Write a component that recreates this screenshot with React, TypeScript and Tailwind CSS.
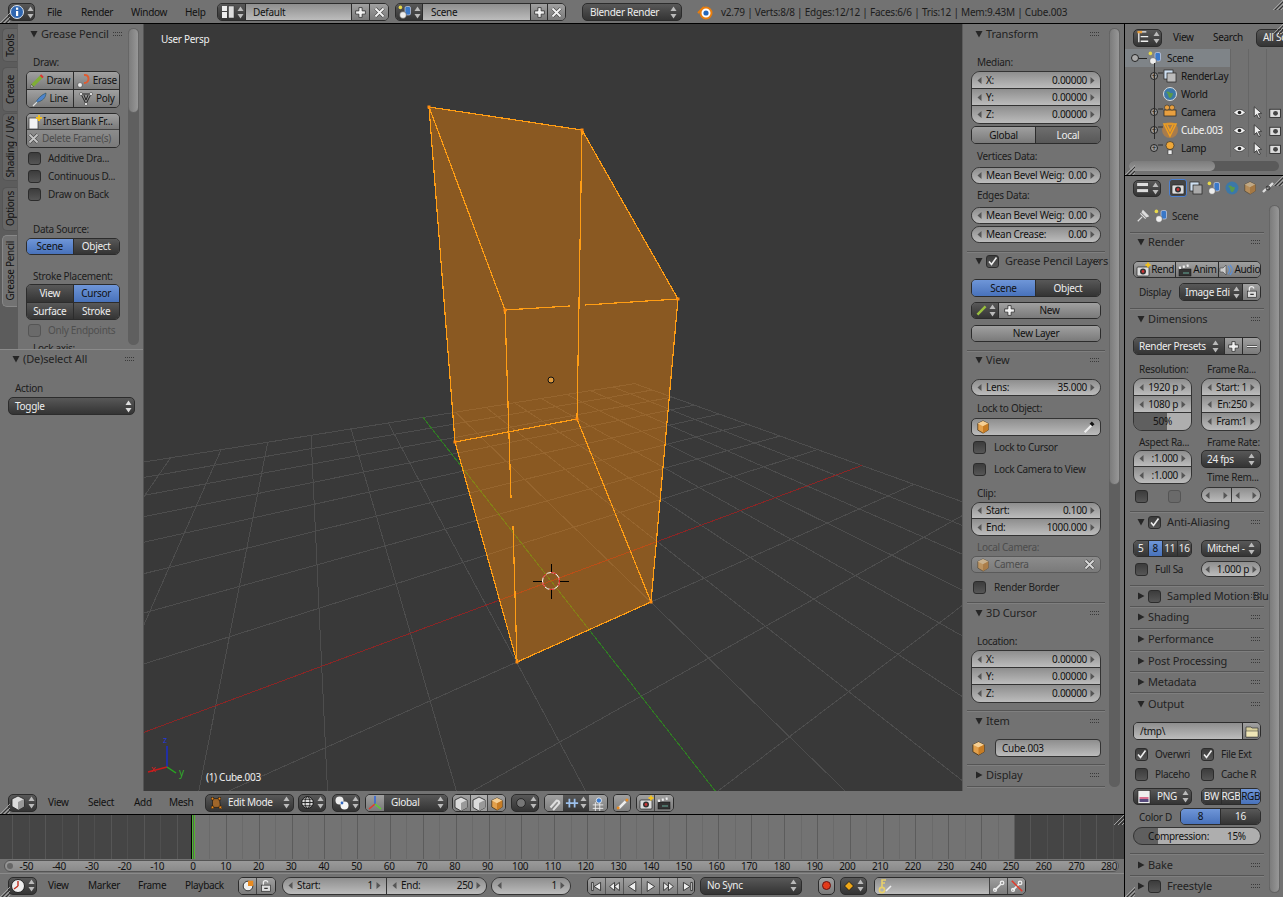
import type { ReactNode } from "react";

const tone = {
  tool: "bg-linear-to-b from-[#a0a0a0] to-[#7a7a7a] text-[#111]",
  dark: "bg-linear-to-b from-[#585858] to-[#343434] text-[#eee]",
  blue: "bg-linear-to-b from-[#6f96d8] to-[#4872bb] text-[#111]",
  num: "bg-linear-to-b from-[#8e8e8e] to-[#bcbcbc] text-[#111]",
  dis: "bg-linear-to-b from-[#8c8c8c] to-[#7a7a7a] text-[#4c4c4c]",
};
type Tone = keyof typeof tone;

const Ico = ({ children, s = 16, className = "" }: { children: ReactNode; s?: number; className?: string }) => (
  <svg width={s} height={s} viewBox="0 0 16 16" className={`shrink-0 ${className}`}>
    {children}
  </svg>
);

const UpDown = ({ c = "#bbb" }: { c?: string }) => (
  <svg width="7" height="13" viewBox="0 0 7 13" className="shrink-0">
    <polygon points="3.5,0.5 6.5,5 0.5,5" fill={c} />
    <polygon points="3.5,12.5 6.5,8 0.5,8" fill={c} />
  </svg>
);

const Info = () => (
  <Ico>
    <circle cx="8" cy="8" r="6.5" fill="#2f66b0" stroke="#dfe6f0" />
    <rect x="7" y="7" width="2.2" height="5" fill="#fff" />
    <rect x="7" y="3.6" width="2.2" height="2.2" fill="#fff" />
  </Ico>
);
const LayoutI = () => (
  <Ico>
    <rect x="2" y="2" width="5" height="5" fill="#eee" />
    <rect x="2" y="8" width="5" height="6" fill="#eee" />
    <rect x="8.5" y="2" width="5.5" height="12" fill="#ddd" stroke="#333" strokeWidth=".5" />
  </Ico>
);
const SceneI = () => (
  <Ico>
    <rect x="8" y="2.5" width="5.5" height="8.5" rx="1.5" fill="#3a78c8" stroke="#dde" strokeWidth=".6" />
    <circle cx="6" cy="11" r="3.4" fill="#eee" stroke="#333" strokeWidth=".5" />
    <circle cx="3.4" cy="3.4" r="1.8" fill="#e8d94a" />
  </Ico>
);
const Plus = () => (
  <Ico s={13}>
    <path d="M6 2h4v4h4v4h-4v4H6v-4H2V6h4z" fill="#f1f1f1" stroke="#333" strokeWidth="1" />
  </Ico>
);
const Cross = ({ c = "#f1f1f1" }: { c?: string }) => (
  <Ico s={13}>
    <path d="M3 3l10 10M13 3L3 13" stroke="#444" strokeWidth="4" />
    <path d="M3 3l10 10M13 3L3 13" stroke={c} strokeWidth="2.4" />
  </Ico>
);
const Logo = () => (
  <Ico>
    <path d="M1 9l6-6" stroke="#e87d0d" strokeWidth="2" />
    <circle cx="9" cy="9" r="5.5" fill="#fff" stroke="#e87d0d" strokeWidth="2" />
    <circle cx="9" cy="9" r="2.6" fill="#2667b8" />
  </Ico>
);
const PencilI = () => (
  <Ico>
    <path d="M3 13L13 3" stroke="#7fae36" strokeWidth="3.5" />
    <path d="M11.5 2l2.5 2.5" stroke="#d33" strokeWidth="2" />
    <path d="M1.5 14.5l1-3 2 2z" fill="#eee" stroke="#222" strokeWidth=".5" />
  </Ico>
);
const EraseI = () => (
  <Ico>
    <path d="M8 2c6-1 6 8 0 8" fill="none" stroke="#e05a30" strokeWidth="2" />
    <circle cx="4" cy="12" r="2.4" fill="#eee" stroke="#333" strokeWidth=".5" />
  </Ico>
);
const LineI = () => (
  <Ico>
    <path d="M3 13C5 8 9 4 14 2c0 5-4 8-8 9z" fill="#4c83cc" stroke="#244" strokeWidth=".5" />
    <path d="M1 15l4-4" stroke="#ddd" strokeWidth="1.2" />
  </Ico>
);
const PolyI = () => (
  <Ico>
    <path d="M3 3h10L8 13zM6 4l2 5 2-5" fill="none" stroke="#222" strokeWidth="1" />
    <circle cx="3" cy="3" r="1.5" fill="#fff" stroke="#222" strokeWidth=".5" />
    <circle cx="13" cy="3" r="1.5" fill="#fff" stroke="#222" strokeWidth=".5" />
    <circle cx="8" cy="13" r="1.5" fill="#fff" stroke="#222" strokeWidth=".5" />
  </Ico>
);
const NewFrame = () => (
  <Ico>
    <rect x="2" y="4" width="9" height="11" fill="#f2f2f2" stroke="#333" strokeWidth=".7" />
    <path d="M12 1v6M9 4h6" stroke="#f0c020" strokeWidth="2" />
  </Ico>
);
const Cube = ({ op = 1, s = 14 }: { op?: number; s?: number }) => (
  <Ico s={s} className={op < 1 ? "opacity-60" : ""}>
    <polygon points="8,1 14,4 14,11.5 8,15 2,11.5 2,4" fill="#e2a04c" stroke="#3a2a10" strokeWidth=".8" />
    <polygon points="8,1 14,4 8,7 2,4" fill="#f5cf94" />
    <polygon points="8,7 14,4 14,11.5 8,15" fill="#c77c24" />
  </Ico>
);
const GrayCube = () => (
  <Ico>
    <polygon points="8,1 14,4 14,11.5 8,15 2,11.5 2,4" fill="#dcdcdc" stroke="#222" strokeWidth=".8" />
    <polygon points="8,7 14,4 14,11.5 8,15" fill="#999" />
  </Ico>
);
const Dropper = () => (
  <Ico s={14}>
    <path d="M3 14l8-8" stroke="#eee" strokeWidth="2.4" />
    <path d="M10 3l3 3" stroke="#111" strokeWidth="3.6" />
  </Ico>
);
const CamR = ({ plus }: { plus?: boolean }) => (
  <Ico>
    <rect x="2" y="5" width="12" height="9" rx="1" fill="#ddd" stroke="#222" strokeWidth=".7" />
    <circle cx="8" cy="9.5" r="3" fill="#333" />
    <circle cx="8" cy="9.5" r="1.4" fill="#c33" />
    {plus && <path d="M13 0.5v5M10.5 3h5" stroke="#f0c020" strokeWidth="1.8" />}
  </Ico>
);
const Clapper = () => (
  <Ico>
    <rect x="2" y="7" width="12" height="7" fill="#333" stroke="#111" strokeWidth=".5" />
    <path d="M2 6l11-3" stroke="#eee" strokeWidth="2.4" strokeDasharray="2 2" />
    <path d="M6 11h6" stroke="#6a9" strokeWidth="1" />
  </Ico>
);
const Speaker = () => (
  <Ico>
    <polygon points="2,6 5,6 8,3 8,13 5,10 2,10" fill="#ccc" stroke="#333" strokeWidth=".5" />
    <path d="M10 4c2 2 2 6 0 8M12 3c3 3 3 7 0 10" fill="none" stroke="#5b8fd6" strokeWidth="1.2" />
  </Ico>
);
const LockI = () => (
  <Ico s={14}>
    <path d="M5 7V4c0-3 5-3 5 0" fill="none" stroke="#eee" strokeWidth="1.5" />
    <rect x="3" y="7" width="10" height="7" fill="#ddd" stroke="#222" strokeWidth=".7" />
    <rect x="6" y="10" width="4" height="1.4" fill="#333" />
  </Ico>
);
const Folder = () => (
  <Ico>
    <path d="M2 4h5l1 1h6v9H2z" fill="#d8cf9c" stroke="#333" strokeWidth=".7" />
    <path d="M2 8h12v6H2z" fill="#efe6b6" stroke="#333" strokeWidth=".5" />
  </Ico>
);
const PngI = () => (
  <Ico>
    <rect x="2" y="1.5" width="12" height="13" fill="#eee" stroke="#222" strokeWidth=".6" />
    <rect x="3.5" y="8" width="9" height="2" fill="#d86f8f" />
    <rect x="3.5" y="10" width="9" height="3" fill="#554a7c" />
  </Ico>
);
const Key = () => (
  <Ico>
    <circle cx="5" cy="12" r="2.6" fill="none" stroke="#e8d06a" strokeWidth="1.6" />
    <path d="M5 9V2h4M5 5h3" fill="none" stroke="#e8d06a" strokeWidth="1.6" />
    <path d="M9 13l5-5" stroke="#eee" strokeWidth="1.6" />
  </Ico>
);
const Wrench = ({ off }: { off?: boolean }) => (
  <Ico s={14}>
    <path d="M3 13l7-7" stroke="#eee" strokeWidth="2" />
    <circle cx="11.5" cy="4.5" r="2" fill="none" stroke="#eee" strokeWidth="1.4" />
    <circle cx="3.5" cy="12.5" r="1.8" fill="none" stroke="#eee" strokeWidth="1.2" />
    {off && <path d="M2 2l12 12" stroke="#e23a2a" strokeWidth="1.8" />}
  </Ico>
);
const EditModeI = () => (
  <Ico s={14}>
    <path d="M4 3h8l1 10H4z" fill="#a0662a" stroke="#111" strokeWidth=".7" />
    <g fill="#f08a18" stroke="#111" strokeWidth=".5">
      <rect x="2.5" y="1.5" width="3" height="3" />
      <rect x="10.5" y="1.5" width="3" height="3" />
      <rect x="2.5" y="11.5" width="3" height="3" />
      <rect x="11.5" y="11.5" width="3" height="3" />
    </g>
  </Ico>
);
const SphereI = () => (
  <Ico s={15}>
    <circle cx="8" cy="8" r="6.2" fill="#d8d8d8" stroke="#111" />
    <ellipse cx="8" cy="8" rx="2.6" ry="6.2" fill="none" stroke="#222" />
    <path d="M2 8h12M3.4 4.5h9.2M3.4 11.5h9.2" stroke="#222" strokeWidth="1" />
  </Ico>
);
const ShadeI = () => (
  <Ico>
    <circle cx="5.5" cy="5.5" r="4" fill="#eee" />
    <circle cx="10.5" cy="10.5" r="4" fill="#f4f4f4" />
    <circle cx="8" cy="8" r="1.4" fill="#2f66c0" />
  </Ico>
);
const AxisI = () => (
  <Ico>
    <path d="M8 9V1" stroke="#3568d8" strokeWidth="1.6" />
    <path d="M8 9l-6 5" stroke="#e03b2c" strokeWidth="1.6" />
    <path d="M8 9l6 5" stroke="#5bd02a" strokeWidth="1.6" />
  </Ico>
);
const Eye = () => (
  <Ico s={13}>
    <path d="M1 8c4-5 10-5 14 0-4 5-10 5-14 0z" fill="#f2f2f2" stroke="#222" strokeWidth=".7" />
    <circle cx="8" cy="8" r="2.2" fill="#222" />
  </Ico>
);
const CursorI = () => (
  <Ico s={13}>
    <path d="M4 1l9 8-4 .5 2.5 5-2 1-2.5-5L4 13z" fill="#eee" stroke="#222" strokeWidth=".9" />
  </Ico>
);
const Expand = () => (
  <span className="flex items-center justify-center w-[8px] h-[8px] rounded-full border border-[#222] bg-[#9a9a9a] text-[8px] leading-none text-[#111] shrink-0">
    +
  </span>
);

const Arrow = ({ open = true }: { open?: boolean }) => (
  <svg width="8" height="8" viewBox="0 0 8 8" className="shrink-0">
    {open ? <polygon points="0.5,1 7.5,1 4,7.5" fill="#262626" /> : <polygon points="1,0.5 7.5,4 1,7.5" fill="#262626" />}
  </svg>
);
const Grip = () => (
  <svg width="9" height="5" viewBox="0 0 9 5" className="shrink-0">
    {[0, 2, 4, 6, 8].map((x) => (
      <g key={x}>
        <rect x={x} y="0" width="1" height="1" fill="#3a3a3a" />
        <rect x={x} y="3" width="1" height="1" fill="#3a3a3a" />
      </g>
    ))}
  </svg>
);
const Check = ({ on, dis, className = "" }: { on?: boolean; dis?: boolean; className?: string }) => (
  <span
    className={`flex items-center justify-center w-[13px] h-[13px] rounded-[3px] border shrink-0 ${
      dis ? "border-[#555] bg-[#6a6a6a]" : "border-[#2c2c2c] bg-linear-to-b from-[#3c3c3c] to-[#565656]"
    } ${className}`}>
    {on && (
      <svg width="11" height="11" viewBox="0 0 11 11">
        <path d="M2 5.5l2.5 3L9.5 1.5" fill="none" stroke="#eee" strokeWidth="1.6" />
      </svg>
    )}
  </span>
);

const Head = ({ title, open = true, check, pad, className = "" }: { title: string; open?: boolean; check?: boolean; pad: string; className?: string }) => (
  <div className={`flex items-center h-[14px] whitespace-nowrap text-[#222] text-[11px] tracking-[-0.15px] ${pad} ${className}`}>
    <Arrow open={open} />
    {check !== undefined && <Check on={check} className="ml-[3px]" />}
    <span className={`flex-1 min-w-0 ${check !== undefined ? "ml-[6px]" : "ml-[3px]"}`}>{title}</span>
    <Grip />
  </div>
);
const Rule = ({ className = "" }: { className?: string }) => <div className={`h-px bg-[#555] shadow-[0_1px_0_#7f7f7f] ${className}`} />;
const Lbl = ({ children, className = "" }: { children: ReactNode; className?: string }) => (
  <div className={`h-[14px] leading-[14px] pl-[6px] whitespace-nowrap overflow-hidden text-[#1c1c1c] ${className}`}>{children}</div>
);
const ChkRow = ({ children, on, dis, gap = "ml-[7px]", className = "" }: { children: ReactNode; on?: boolean; dis?: boolean; gap?: string; className?: string }) => (
  <div className={`flex items-center h-[14px] pl-[2px] whitespace-nowrap overflow-hidden ${dis ? "text-[#4f4f4f]" : "text-[#1c1c1c]"} ${className}`}>
    <Check on={on} dis={dis} />
    <span className={gap}>{children}</span>
  </div>
);
const Cell = ({ t = "tool", className = "", children }: { t?: Tone; className?: string; children?: ReactNode }) => (
  <div className={`flex items-center justify-center whitespace-nowrap overflow-hidden ${tone[t]} ${className}`}>{children}</div>
);
const Joined = ({ children, className = "" }: { children: ReactNode; className?: string }) => (
  <div className={`flex overflow-hidden rounded-[5px] border border-[#2c2c2c] divide-x divide-[#2c2c2c] ${className}`}>{children}</div>
);
const Arr = ({ dir }: { dir: "l" | "r" }) => (
  <svg width="5" height="7" viewBox="0 0 5 7" className="shrink-0">
    <polygon points={dir === "l" ? "4.5,0 4.5,7 0.5,3.5" : "0.5,0 0.5,7 4.5,3.5"} fill="#555" />
  </svg>
);
const Num = ({ label, value, className = "" }: { label?: string; value?: string; className?: string }) => (
  <div className={`flex items-center h-[17px] px-[5px] whitespace-nowrap overflow-hidden text-[#111] bg-linear-to-b from-[#8e8e8e] to-[#bcbcbc] ${className}`}>
    <Arr dir="l" />
    {label && <span className="ml-[4px]">{label}</span>}
    <span className="ml-auto mr-[3px]">{value}</span>
    <Arr dir="r" />
  </div>
);
const Pill = ({ children, className = "" }: { children: ReactNode; className?: string }) => (
  <div className={`flex flex-col overflow-hidden rounded-[9px] border border-[#333] divide-y divide-[#333] ${className}`}>{children}</div>
);
const One = ({ label, value, className = "" }: { label: string; value: string; className?: string }) => (
  <Pill className={className}>
    <Num label={label} value={value} className="!h-[15px]" />
  </Pill>
);
const DropIcon = ({ children, className = "" }: { children: ReactNode; className?: string }) => (
  <div className={`flex items-center justify-center gap-[2px] h-[18px] shrink-0 whitespace-nowrap rounded-[5px] border border-[#2c2c2c] ${tone.dark} ${className}`}>
    {children}
    <UpDown />
  </div>
);
const Corner = ({ className = "" }: { className?: string }) => (
  <svg width="10" height="10" viewBox="0 0 10 10" className={`absolute ${className}`}>
    <path d="M0 10L10 0M4 10l6-6M8 10l2-2" stroke="#a0a0a0" strokeWidth="1" />
    <path d="M2 10l8-8M6 10l4-4" stroke="#333" strokeWidth="1" />
  </svg>
);
const Scrollbar = ({ className = "", thumb }: { className?: string; thumb: string }) => (
  <div className={`flex flex-col w-[11px] rounded-[6px] bg-[#5f5f5f] shrink-0 ${className}`}>
    <div className={`rounded-[6px] bg-linear-to-r from-[#7c7c7c] to-[#979797] border border-[#666] ${thumb}`} />
  </div>
);
const M = ({ w, children }: { w: string; children: ReactNode }) => <span className={`${w} shrink-0 text-[#111]`}>{children}</span>;

// floor grid: projective map with the vanishing points read off the picture
const O = [551, 581];
const V1 = [1420, 258];
const V2 = [303, 264];
const A = 0.0696;
const B = 0.1333;
const pt = (u: number, v: number) => {
  const w = 1 + A * u + B * v;
  return [(O[0] + A * u * V1[0] + B * v * V2[0]) / w, (O[1] + A * u * V1[1] + B * v * V2[1]) / w];
};
const seg = (u0: number, v0: number, u1: number, v1: number) => {
  const a = pt(u0, v0);
  const b = pt(u1, v1);
  return `M${a[0].toFixed(1)} ${a[1].toFixed(1)}L${b[0].toFixed(1)} ${b[1].toFixed(1)}`;
};
const lineU = (u: number) => seg(u, Math.max(-8, (0.06 - 1 - A * u) / B), u, 8);
const lineV = (v: number) => seg(Math.max(-8, (0.06 - 1 - B * v) / A), v, 8, v);
const steps = Array.from({ length: 17 }, (_, i) => i - 8);
const gridPath = [...steps.filter((s) => s !== 0).map(lineU), ...steps.filter((s) => s !== 0).map(lineV)].join("");

const Edge = ({ d }: { d: string }) => <path d={d} fill="none" stroke="#ff9d14" strokeWidth="1.2" shapeRendering="crispEdges" />;

const Viewport = () => (
  <div className="relative flex-1 bg-[#393939] overflow-hidden">
    <svg width="818" height="767" viewBox="144 24 818 767" className="block">
      <path d={gridPath} fill="none" stroke="#4d4d4d" strokeWidth="1" shapeRendering="crispEdges" />
      <path d={lineU(0)} fill="none" stroke="#2f7d22" strokeWidth="1" shapeRendering="crispEdges" />
      <path d={lineV(0)} fill="none" stroke="#8a2626" strokeWidth="1" shapeRendering="crispEdges" />
      <polygon points="429,107 582,130 678,299 651,602 517,662 455,442" fill="#ff8903" fillOpacity=".41" />
      <Edge d="M429 107L582 130L678 299L651 602L517 662L455 442L429 107" />
      <Edge d="M429 107L505 310L570 306M585 305L678 299" />
      <Edge d="M582 130L577 419L651 602" />
      <Edge d="M455 442L577 419" />
      <Edge d="M505 310L511 498M513 526L517 662" />
      {[[429, 107], [582, 130], [678, 299], [505, 310], [455, 442], [577, 419], [517, 662], [651, 602]].map(([x, y]) => (
        <rect key={`${x}-${y}`} x={x - 1.5} y={y - 1.5} width="3" height="3" fill="#ff8c10" />
      ))}
      <circle cx="551" cy="380" r="3" fill="#e09a3c" stroke="#111" />
      <circle cx="551" cy="581" r="8.5" fill="none" stroke="#fff" strokeWidth="1" />
      <circle cx="551" cy="581" r="8.5" fill="none" stroke="#e01010" strokeWidth="1" strokeDasharray="5 5" />
      <path d="M533 581h9M560 581h9M551 564v8M551 590v9" stroke="#000" strokeWidth="1" shapeRendering="crispEdges" />
      <path d="M167 767V746" stroke="#1a2cc8" strokeWidth="1.5" />
      <path d="M167 767l-19 5" stroke="#c81a1a" strokeWidth="1.5" />
      <path d="M167 767l9 6" stroke="#28a820" strokeWidth="1.5" />
    </svg>
    <span className="absolute left-[17px] top-[8px] text-[#f0f0f0]">User Persp</span>
    <span className="absolute left-[62px] top-[746px] text-[#f0f0f0]">(1) Cube.003</span>
    <span className="absolute left-[19px] top-[709px] text-[#2438d8] text-[9px]">z</span>
    <span className="absolute left-[7px] top-[738px] text-[#d02020] text-[9px]">x</span>
    <span className="absolute left-[35px] top-[741px] text-[#30b028] text-[10px]">y</span>
  </div>
);

const TAB = "flex items-center justify-center w-[15px] rounded-l-[5px] border border-r-0 whitespace-nowrap";

const Shelf = () => (
  <div className="flex flex-col w-[144px] h-full border-r border-[#555] bg-[#727272] shrink-0">
    <div className="flex h-[325px] shrink-0 overflow-hidden">
      <div className="flex flex-col w-[18px] pl-[2px] pt-[4px] bg-[#5c5c5c] shrink-0 text-[#111] *:shrink-0">
        <div className={`${TAB} h-[34px] bg-[#666] border-[#555]`}><span className="[writing-mode:vertical-rl] rotate-180">Tools</span></div>
        <div className={`${TAB} h-[45px] mt-[5px] bg-[#666] border-[#555]`}><span className="[writing-mode:vertical-rl] rotate-180">Create</span></div>
        <div className={`${TAB} h-[68px] mt-px bg-[#666] border-[#555]`}><span className="[writing-mode:vertical-rl] rotate-180">Shading / UVs</span></div>
        <div className={`${TAB} h-[44px] mt-[6px] bg-[#666] border-[#555]`}><span className="[writing-mode:vertical-rl] rotate-180">Options</span></div>
        <div className={`${TAB} h-[72px] mt-[4px] bg-[#727272] border-[#888]`}><span className="[writing-mode:vertical-rl] rotate-180">Grease Pencil</span></div>
      </div>
      <div className="flex flex-col w-[94px] ml-[8px] shrink-0 *:shrink-0">
        <Head title="Grease Pencil" pad="pl-[4px] -mr-[2px]" className="mt-[3px]" />
        <Lbl className="mt-[14px] pl-[7px]">Draw:</Lbl>
        <div className="flex flex-col overflow-hidden rounded-[5px] border border-[#2c2c2c] mt-[2px] divide-y divide-[#2c2c2c]">
          <div className="flex divide-x divide-[#2c2c2c]">
            <Cell className="h-[17px] flex-1 gap-[1px]"><PencilI />Draw</Cell>
            <Cell className="h-[17px] flex-1 gap-[1px]"><EraseI />Erase</Cell>
          </div>
          <div className="flex divide-x divide-[#2c2c2c]">
            <Cell className="h-[17px] flex-1 gap-[2px]"><LineI />Line</Cell>
            <Cell className="h-[17px] flex-1 gap-[2px]"><PolyI />Poly</Cell>
          </div>
        </div>
        <div className="flex flex-col overflow-hidden rounded-[5px] border border-[#2c2c2c] mt-[5px]">
          <Cell className="h-[16px] border-b border-[#444] !justify-start"><NewFrame />Insert Blank Fr...</Cell>
          <Cell t="dis" className="h-[17px] !justify-start"><Cross c="#c4c4c4" /><span className="ml-[2px]">Delete Frame(s)</span></Cell>
        </div>
        <ChkRow className="mt-[3px]">Additive Dra...</ChkRow>
        <ChkRow className="mt-[4px]">Continuous D...</ChkRow>
        <ChkRow className="mt-[4px]">Draw on Back</ChkRow>
        <Lbl className="mt-[21px] pl-[7px]">Data Source:</Lbl>
        <Joined className="mt-[2px]">
          <Cell t="blue" className="h-[15px] flex-1">Scene</Cell>
          <Cell t="dark" className="h-[15px] flex-1">Object</Cell>
        </Joined>
        <Lbl className="mt-[14px] pl-[7px]">Stroke Placement:</Lbl>
        <div className="flex flex-col overflow-hidden rounded-[5px] border border-[#2c2c2c] mt-[1px] divide-y divide-[#2c2c2c]">
          <div className="flex divide-x divide-[#2c2c2c]">
            <Cell t="dark" className="h-[17px] flex-1">View</Cell>
            <Cell t="blue" className="h-[17px] flex-1">Cursor</Cell>
          </div>
          <div className="flex divide-x divide-[#2c2c2c]">
            <Cell t="dark" className="h-[16px] flex-1">Surface</Cell>
            <Cell t="dark" className="h-[16px] flex-1">Stroke</Cell>
          </div>
        </div>
        <ChkRow dis className="mt-[3px]">Only Endpoints</ChkRow>
        <Lbl className="mt-[4px] pl-[7px]">Lock axis:</Lbl>
      </div>
      <Scrollbar className="ml-[8px] mt-[4px] h-[317px]" thumb="h-[85px]" />
    </div>
    <div className="flex flex-col flex-1 border-t border-[#8a8a8a] px-[8px] *:shrink-0">
      <Head title="(De)select All" pad="pl-[4px]" className="mt-[2px] pr-px" />
      <Lbl className="mt-[15px] pl-[7px]">Action</Lbl>
      <div className={`flex items-center h-[18px] mt-[2px] pl-[6px] pr-[2px] rounded-[5px] border border-[#2c2c2c] ${tone.dark}`}>
        <span className="flex-1">Toggle</span>
        <UpDown c="#ddd" />
      </div>
    </div>
  </div>
);

const NPanel = () => (
  <div className="relative flex w-[162px] h-full bg-[#727272] border-l border-[#5c5c5c] pl-[4px] shrink-0">
    <div className="flex flex-col w-[138px] px-[4px] shrink-0 *:shrink-0">
      <Head title="Transform" pad="pl-[4px] pr-[2px]" className="mt-[3px]" />
      <Lbl className="mt-[14px]">Median:</Lbl>
      <Pill className="mt-[2px]">
        <Num label="X:" value="0.00000" />
        <Num label="Y:" value="0.00000" />
        <Num label="Z:" value="0.00000" />
      </Pill>
      <Joined className="mt-[2px]">
        <Cell className="h-[16px] w-[64px]">Global</Cell>
        <Cell className="h-[16px] flex-1 !from-[#6e6e6e] !to-[#585858] !text-[#eee]">Local</Cell>
      </Joined>
      <Lbl className="mt-[5px]">Vertices Data:</Lbl>
      <One className="mt-[4px]" label="Mean Bevel Weig:" value="0.00" />
      <Lbl className="mt-[4px]">Edges Data:</Lbl>
      <One className="mt-[5px]" label="Mean Bevel Weig:" value="0.00" />
      <One className="mt-[2px]" label="Mean Crease:" value="0.00" />
      <Rule className="mt-[8px] -mx-[4px]" />
      <Head title="Grease Pencil Layers" check pad="pl-[4px] pr-[2px]" className="mt-[2px]" />
      <Joined className="mt-[11px]">
        <Cell t="blue" className="h-[16px] w-[64px]">Scene</Cell>
        <Cell t="dark" className="h-[16px] flex-1">Object</Cell>
      </Joined>
      <Joined className="mt-[5px]">
        <Cell t="dark" className="h-[15px] w-[27px] gap-[1px]"><Ico s={13}><path d="M3 13L13 3" stroke="#9ac03e" strokeWidth="3" /></Ico><UpDown /></Cell>
        <Cell className="h-[15px] flex-1 relative"><span className="absolute left-[4px] top-[1px]"><Plus /></span>New</Cell>
      </Joined>
      <Joined className="mt-[6px]">
        <Cell className="h-[15px] flex-1">New Layer</Cell>
      </Joined>
      <Rule className="mt-[8px] -mx-[4px]" />
      <Head title="View" pad="pl-[4px] pr-[2px]" className="mt-[2px]" />
      <One className="mt-[12px]" label="Lens:" value="35.000" />
      <Lbl className="mt-[5px]">Lock to Object:</Lbl>
      <div className={`flex items-center justify-between h-[18px] mt-[3px] px-[4px] rounded-[5px] border border-[#333] ${tone.num}`}>
        <Cube /><Dropper />
      </div>
      <ChkRow className="mt-[4px]" gap="ml-[8px]">Lock to Cursor</ChkRow>
      <ChkRow className="mt-[8px]" gap="ml-[8px]">Lock Camera to View</ChkRow>
      <Lbl className="mt-[10px]">Clip:</Lbl>
      <Pill className="mt-[2px]">
        <Num label="Start:" value="0.100" className="!h-[16px]" />
        <Num label="End:" value="1000.000" className="!h-[16px]" />
      </Pill>
      <Lbl className="mt-[4px] !text-[#4c4c4c]">Local Camera:</Lbl>
      <div className={`flex items-center h-[17px] mt-[2px] px-[4px] rounded-[5px] border border-[#5a5a5a] ${tone.dis}`}>
        <Cube op={0.6} />
        <span className="ml-[4px] flex-1">Camera</span>
        <Cross c="#d8d8d8" />
      </div>
      <ChkRow className="mt-[7px]" gap="ml-[8px]">Render Border</ChkRow>
      <Rule className="mt-[8px] -mx-[4px]" />
      <Head title="3D Cursor" pad="pl-[4px] pr-[2px]" className="mt-[3px]" />
      <Lbl className="mt-[14px]">Location:</Lbl>
      <Pill className="mt-[2px]">
        <Num label="X:" value="0.00000" />
        <Num label="Y:" value="0.00000" />
        <Num label="Z:" value="0.00000" />
      </Pill>
      <Rule className="mt-[7px] -mx-[4px]" />
      <Head title="Item" pad="pl-[4px] pr-[2px]" className="mt-[3px]" />
      <div className="flex items-center mt-[11px]">
        <Cube s={15} />
        <div className={`flex items-center flex-1 h-[18px] ml-[9px] pl-[6px] rounded-[4px] border border-[#333] ${tone.num}`}>Cube.003</div>
      </div>
      <Rule className="mt-[7px] -mx-[4px]" />
      <Head title="Display" open={false} pad="pl-[4px] pr-[2px]" className="mt-[3px]" />
      <Rule className="mt-[4px] -mx-[4px]" />
    </div>
    <Scrollbar className="ml-[4px] mt-[4px] h-[759px]" thumb="h-[457px]" />
  </div>
);

const OutRow = ({ children, active, eyes, extra }: { children: ReactNode; active?: boolean; eyes?: boolean; extra?: ReactNode }) => (
  <div className="flex items-center h-[18px]">
    <div className={`flex items-center w-[105px] h-full overflow-hidden whitespace-nowrap text-[#111] shrink-0 ${active ? "bg-[#7f8488]" : ""}`}>{children}</div>
    {extra}
    {eyes && (
      <div className="flex items-center justify-end flex-1 gap-[5px] pr-[1px]">
        <Eye /><CursorI /><Ico s={13}><rect x="1" y="4" width="13" height="10" fill="#ddd" stroke="#222" /><circle cx="8" cy="9" r="3" fill="#444" /></Ico>
      </div>
    )}
  </div>
);

const Outliner = () => (
  <div className="relative flex flex-col h-[152px] border-b border-black bg-[#727272] overflow-hidden shrink-0 *:shrink-0">
    <div className="flex items-center h-[25px] pl-[8px] pt-[2px] overflow-hidden">
      <DropIcon className="w-[29px]"><Ico s={15}><path d="M3 2h8M3 2v11M5 7h8M5 12h8" stroke="#f0f0f0" strokeWidth="1.4" /><rect x="1.5" y="1" width="5" height="2.5" fill="#e8a040" /></Ico></DropIcon>
      <M w="w-[40px] ml-[11px]">View</M>
      <M w="w-[43px]">Search</M>
      <div className={`flex items-center h-[18px] w-[60px] pl-[6px] whitespace-nowrap rounded-[5px] border border-[#2c2c2c] shrink-0 ${tone.dark}`}>All Scenes</div>
    </div>
    <div className="relative">
      <OutRow active><span className="ml-[6px] w-[8px] h-[8px] rounded-full border border-[#222] bg-[#aaa] shrink-0" /><span className="w-[8px] h-px bg-[#222] shrink-0" /><SceneI /><span className="ml-[4px]">Scene</span></OutRow>
      <OutRow><span className="ml-[25px]"><Expand /></span><span className="ml-[4px]"><Ico><rect x="2" y="2" width="9" height="9" fill="#cfe0f2" stroke="#222" strokeWidth=".7" /><rect x="5" y="5" width="9" height="9" fill="#bbb" stroke="#222" strokeWidth=".7" /></Ico></span><span className="ml-[3px]">RenderLay</span></OutRow>
      <OutRow><span className="ml-[37px]"><Ico><circle cx="8" cy="8" r="6.5" fill="#3c78a8" stroke="#ddd" /><path d="M4 6c3-2 4 2 6 1s0 5-2 5-1-4-4-6z" fill="#5a9a4a" /></Ico></span><span className="ml-[3px]">World</span></OutRow>
      <OutRow extra={<span className="w-px h-[10px] bg-[#333]" />} eyes><span className="ml-[25px]"><Expand /></span><span className="ml-[4px]"><Ico><rect x="2" y="6" width="12" height="6" fill="#e8a040" stroke="#222" strokeWidth=".7" /><circle cx="5" cy="3.5" r="2.5" fill="#e8a040" stroke="#222" strokeWidth=".5" /><circle cx="10" cy="3.5" r="2.5" fill="#e8a040" stroke="#222" strokeWidth=".5" /></Ico></span><span className="ml-[3px]">Camera</span></OutRow>
      <OutRow eyes><span className="ml-[25px]"><Expand /></span><span className="ml-[4px] rounded-full bg-[#a87c4c]"><Ico><path d="M2 2h12L8 14zM5 3l3 6 3-6" fill="none" stroke="#f0a020" strokeWidth="1.5" /></Ico></span><span className="ml-[3px] text-[#f4f4f4]">Cube.003</span></OutRow>
      <OutRow eyes extra={<span className="w-px h-[10px] bg-[#333]" />}><span className="ml-[25px]"><Expand /></span><span className="ml-[4px]"><Ico><circle cx="8" cy="5.5" r="4" fill="#f0a838" stroke="#222" strokeWidth=".6" /><rect x="6" y="10" width="4" height="4.5" fill="#eee" stroke="#222" strokeWidth=".5" /></Ico></span><span className="ml-[3px]">Lamp</span></OutRow>
      <svg width="158" height="110" className="absolute left-0 top-0 pointer-events-none">
        <path d="M105.5 0V108M123.5 0V108M141.5 0V108" stroke="#666" strokeWidth="1" />
        <path d="M29.5 18V94M33 28h5M33 64h5M33 82h5M33 100h5" stroke="#2a2a2a" strokeWidth="1" transform="translate(0,-4)" />
      </svg>
    </div>
    <div className="flex h-[10px] mt-[4px] mx-[4px] rounded-[5px] bg-[#5a5a5a]">
      <div className="w-[86px] rounded-[5px] bg-linear-to-b from-[#7c7c7c] to-[#979797]" />
    </div>
    <Corner className="right-0 top-0" />
    <Corner className="left-0 bottom-0" />
  </div>
);

const Div = ({ mt }: { mt: string }) => <Rule className={`${mt} -mx-[3px]`} />;
const PHead = (p: { title: string; open?: boolean; check?: boolean; mt: string }) => (
  <Head title={p.title} open={p.open} check={p.check} pad="pl-[4px] pr-[1px]" className={p.mt} />
);

const Properties = () => (
  <div className="relative flex flex-col flex-1 bg-[#727272] overflow-hidden">
    <div className="flex items-center h-[24px] pl-[8px] shrink-0">
      <DropIcon className="w-[28px] !h-[17px]"><Ico s={14}><rect x="1" y="2" width="13" height="4" fill="#ddd" stroke="#222" strokeWidth=".5" /><rect x="1" y="9" width="13" height="4" fill="#ddd" stroke="#222" strokeWidth=".5" /></Ico></DropIcon>
      <div className="flex items-center ml-[8px] shrink-0">
        <span className="flex items-center justify-center w-[18px] h-[18px] rounded-[3px] border border-[#4c80d0] bg-[#444]"><CamR /></span>
        <span className="w-[18px] flex justify-center"><Ico><rect x="2" y="2" width="9" height="9" fill="#cfe0f2" stroke="#222" strokeWidth=".7" /><rect x="5" y="5" width="9" height="9" fill="#aaa" stroke="#222" strokeWidth=".7" /></Ico></span>
        <span className="w-[18px] flex justify-center"><SceneI /></span>
        <span className="w-[18px] flex justify-center"><Ico><circle cx="8" cy="8" r="6.5" fill="#3c78a8" /><path d="M4 6c3-2 4 2 6 1s0 5-2 5-1-4-4-6z" fill="#5a9a4a" /></Ico></span>
        <span className="w-[18px] flex justify-center"><Cube op={0.99} /></span>
        <span className="w-[18px] flex justify-center"><Ico><path d="M3 12l4-4M9 7l4-4" stroke="#ddd" strokeWidth="2.4" /><circle cx="8" cy="8" r="2" fill="none" stroke="#333" /></Ico></span>
      </div>
    </div>
    <div className="flex flex-1 pl-[5px] min-h-0">
      <div className="flex flex-col w-[134px] px-[3px] shrink-0 *:shrink-0">
        <div className="flex items-center h-[16px] mt-[8px] pl-[3px]">
          <Ico s={14}><path d="M2 14l5-5M5 5l6 6M8 2l6 6-2 1-5-5z" fill="#ddd" stroke="#ddd" strokeWidth="1.4" /></Ico>
          <span className="ml-[3px]"><SceneI /></span>
          <span className="ml-[3px] text-[#1c1c1c]">Scene</span>
        </div>
        <Div mt="mt-[8px]" />
        <PHead title="Render" mt="mt-[2px]" />
        <Joined className="mt-[12px]">
          <Cell className="h-[15px] flex-1"><CamR plus />Rend</Cell>
          <Cell className="h-[15px] flex-1"><Clapper />Anim</Cell>
          <Cell className="h-[15px] flex-1"><Speaker />Audio</Cell>
        </Joined>
        <div className="flex items-center h-[18px] mt-[5px]">
          <Lbl className="w-[46px] shrink-0">Display</Lbl>
          <Joined className="flex-1">
            <Cell t="dark" className="h-[16px] flex-1 gap-[3px] pl-[3px]">Image Edi<UpDown /></Cell>
            <Cell className="h-[16px] w-[17px]"><LockI /></Cell>
          </Joined>
        </div>
        <Div mt="mt-[7px]" />
        <PHead title="Dimensions" mt="mt-[3px]" />
        <Joined className="mt-[11px]">
          <Cell t="dark" className="h-[16px] flex-1 !justify-between px-[5px]">Render Presets<UpDown /></Cell>
          <Cell className="h-[16px] w-[18px]"><Plus /></Cell>
          <Cell className="h-[16px] w-[17px]"><span className="w-[10px] h-[3px] bg-[#eee] border-y border-[#555]" /></Cell>
        </Joined>
        <div className="flex justify-between mt-[7px]">
          <div className="flex flex-col w-[59px]">
            <Lbl>Resolution:</Lbl>
            <Pill className="mt-[2px]">
              <Num value="1920 p" />
              <Num value="1080 p" />
              <div className="flex items-center justify-center h-[17px] text-[#111] bg-[linear-gradient(90deg,#5f5f5f_58%,#aeaeae_58%)]">50%</div>
            </Pill>
            <Lbl className="mt-[4px]">Aspect Ra...</Lbl>
            <Pill className="mt-[1px]">
              <Num value=":1.000" className="!h-[16px]" />
              <Num value=":1.000" className="!h-[16px]" />
            </Pill>
            <div className="flex items-center justify-between h-[14px] mt-[5px] px-[2px]">
              <Check />
              <Check dis className="mr-[9px]" />
            </div>
          </div>
          <div className="flex flex-col w-[60px]">
            <Lbl>Frame Ra...</Lbl>
            <Pill className="mt-[2px]">
              <Num value="Start: 1" />
              <Num value="En:250" />
              <Num value="Fram:1" />
            </Pill>
            <Lbl className="mt-[4px]">Frame Rate:</Lbl>
            <DropIcon className="mt-[1px] !justify-between px-[5px]">24 fps</DropIcon>
            <Lbl className="mt-[2px]">Time Rem...</Lbl>
            <div className="flex rounded-[9px] border border-[#333] overflow-hidden mt-[3px] divide-x divide-[#333]">
              <Num className="flex-1 !px-[3px] !h-[14px]" />
              <Num className="flex-1 !px-[3px] !h-[14px]" />
            </div>
          </div>
        </div>
        <Div mt="mt-[8px]" />
        <PHead title="Anti-Aliasing" check mt="mt-[3px]" />
        <div className="flex justify-between mt-[11px]">
          <Joined className="w-[59px]">
            <Cell t="dark" className="h-[15px] flex-1">5</Cell>
            <Cell t="blue" className="h-[15px] flex-1">8</Cell>
            <Cell t="dark" className="h-[15px] flex-1">11</Cell>
            <Cell t="dark" className="h-[15px] flex-1">16</Cell>
          </Joined>
          <DropIcon className="w-[60px] !h-[17px] !justify-between px-[5px]">Mitchel -</DropIcon>
        </div>
        <div className="flex justify-between items-center h-[16px] mt-[4px]">
          <ChkRow>Full Sa</ChkRow>
          <Pill className="w-[60px]"><Num value="1.000 p" className="!px-[3px] !h-[14px]" /></Pill>
        </div>
        <Div mt="mt-[8px]" />
        <PHead title="Sampled Motion Blur" open={false} check={false} mt="mt-[3px]" />
        <Div mt="mt-[3px]" />
        <PHead title="Shading" open={false} mt="mt-[3px]" />
        <Div mt="mt-[4px]" />
        <PHead title="Performance" open={false} mt="mt-[3px]" />
        <Div mt="mt-[4px]" />
        <PHead title="Post Processing" open={false} mt="mt-[3px]" />
        <Div mt="mt-[3px]" />
        <PHead title="Metadata" open={false} mt="mt-[3px]" />
        <Div mt="mt-[3px]" />
        <PHead title="Output" mt="mt-[4px]" />
        <Joined className="mt-[11px]">
          <Cell t="num" className="h-[16px] flex-1 !justify-start pl-[6px]">/tmp\</Cell>
          <Cell className="h-[16px] w-[17px]"><Folder /></Cell>
        </Joined>
        <div className="flex justify-between mt-[7px]">
          <ChkRow className="w-[62px]" on>Overwri</ChkRow>
          <ChkRow className="w-[62px]" on>File Ext</ChkRow>
        </div>
        <div className="flex justify-between mt-[6px]">
          <ChkRow className="w-[62px]">Placeho</ChkRow>
          <ChkRow className="w-[62px]">Cache R</ChkRow>
        </div>
        <div className="flex justify-between mt-[7px]">
          <DropIcon className="w-[59px] !h-[17px] !justify-between px-[2px]"><PngI /><span>PNG</span></DropIcon>
          <Joined className="w-[60px]">
            <Cell t="dark" className="h-[15px] flex-1">BW</Cell>
            <Cell t="dark" className="h-[15px] flex-1">RGB</Cell>
            <Cell t="blue" className="h-[15px] flex-1">RGB</Cell>
          </Joined>
        </div>
        <div className="flex items-center mt-[3px]">
          <Lbl className="w-[47px] shrink-0">Color D</Lbl>
          <Joined className="flex-1">
            <Cell t="blue" className="h-[15px] w-[40px]">8</Cell>
            <Cell t="dark" className="h-[15px] flex-1">16</Cell>
          </Joined>
        </div>
        <div className="flex items-center justify-center gap-[18px] h-[18px] mt-[2px] rounded-[9px] border border-[#333] text-[#111] bg-[linear-gradient(90deg,#5f5f5f_19%,#aeaeae_19%)]">
          <span>Compression:</span><span>15%</span>
        </div>
        <Div mt="mt-[8px]" />
        <PHead title="Bake" open={false} mt="mt-[4px]" />
        <Div mt="mt-[3px]" />
        <PHead title="Freestyle" open={false} check={false} mt="mt-[3px]" />
      </div>
      <Scrollbar className="ml-[5px] mt-[5px] h-[688px]" thumb="h-[688px]" />
    </div>
    <Corner className="right-0 top-0" />
    <Corner className="left-0 bottom-0" />
  </div>
);

const frames = Array.from({ length: 34 }, (_, i) => (i - 5) * 10);
const Timeline = () => (
  <div className="relative flex h-[44px] shrink-0 overflow-hidden">
    <div className="w-[192px] bg-[#454545] border-r border-black shrink-0" />
    <div className="w-[3px] bg-[#4fb82e] shrink-0" />
    <div className="flex-1 bg-[#737373]" />
    <div className="w-[109px] bg-[#454545] shrink-0" />
    <svg width="1124" height="44" className="absolute left-0 top-0">
      {Array.from({ length: 70 }, (_, i) => i - 11).map((f) => {
        const x = Math.round(193 + f * 16.42) + 0.5;
        return <path key={f} d={`M${x} 0V44`} stroke={f % 2 === 0 ? "#5c5c5c" : "#6a6a6a"} strokeOpacity={f < 0 || f > 50 ? 0.45 : 1} strokeWidth="1" />;
      })}
    </svg>
    <Corner className="right-0 top-0" />
  </div>
);

const Lc = ({ children, className = "" }: { children: ReactNode; className?: string }) => (
  <div className={`flex items-center justify-center w-[18px] h-[18px] shrink-0 ${tone.tool} ${className}`}>{children}</div>
);

const ViewHeader = () => (
  <div className="relative flex items-center h-[24px] pl-[8px] bg-[#727272] border-b border-black shrink-0 whitespace-nowrap">
    <DropIcon className="w-[29px]"><GrayCube /></DropIcon>
    <M w="w-[40px] ml-[11px]">View</M>
    <M w="w-[46px]">Select</M>
    <M w="w-[35px]">Add</M>
    <M w="w-[36px]">Mesh</M>
    <div className={`flex items-center justify-between w-[89px] h-[18px] px-[3px] rounded-[5px] border border-[#2c2c2c] shrink-0 ${tone.dark}`}>
      <EditModeI /><span className="flex-1 ml-[5px]">Edit Mode</span><UpDown />
    </div>
    <DropIcon className="w-[28px] ml-[4px]"><SphereI /></DropIcon>
    <DropIcon className="w-[28px] ml-[6px]"><ShadeI /></DropIcon>
    <div className="flex items-center w-[83px] h-[18px] ml-[5px] overflow-hidden rounded-[5px] border border-[#2c2c2c] shrink-0">
      <Lc className="!h-full"><AxisI /></Lc>
      <div className={`flex items-center justify-between flex-1 h-full pl-[7px] pr-[3px] ${tone.dark}`}>Global<UpDown /></div>
    </div>
    <div className="flex w-[54px] h-[18px] ml-[4px] overflow-hidden rounded-[5px] border border-[#2c2c2c] divide-x divide-[#444] shrink-0">
      <Lc className="flex-1"><GrayCube /></Lc>
      <Lc className="flex-1 !from-[#b0b0b0] !to-[#999]"><GrayCube /></Lc>
      <Lc className="flex-1"><Cube /></Lc>
    </div>
    <DropIcon className="w-[28px] ml-[5px]"><Ico s={14}><circle cx="8" cy="8" r="5" fill="#777" stroke="#222" /></Ico></DropIcon>
    <div className="flex w-[64px] h-[18px] ml-[5px] overflow-hidden rounded-[5px] border border-[#2c2c2c] shrink-0">
      <Lc><Ico s={14}><path d="M4 12L11 4a3 3 0 0 1 3 3l-7 8" fill="none" stroke="#ddd" strokeWidth="2.4" /></Ico></Lc>
      <div className={`flex items-center justify-center gap-[1px] flex-1 ${tone.dark}`}><Ico s={14}><path d="M1 8h14M5 3v10M11 3v10" stroke="#9cc0ec" strokeWidth="2" /></Ico><UpDown /></div>
      <Lc><Ico s={14}><path d="M2 9h12M2 13h12M5 6v10M10 6v10" stroke="#eee" strokeWidth="1" /><circle cx="9" cy="4" r="3" fill="#3c7cd0" stroke="#eee" /></Ico></Lc>
    </div>
    <div className="flex w-[18px] h-[18px] ml-[5px] overflow-hidden rounded-[4px] border border-[#2c2c2c] shrink-0">
      <Lc><Ico s={14}><path d="M3 13l8-8" stroke="#eee" strokeWidth="3" /><rect x="1" y="11" width="3" height="3" fill="#e88a20" /><rect x="11" y="2" width="3" height="3" fill="#e88a20" /></Ico></Lc>
    </div>
    <Joined className="ml-[5px] h-[18px] !divide-[#444]">
      <Lc className="!h-full"><CamR plus /></Lc>
      <Lc className="!h-full"><Clapper /></Lc>
    </Joined>
    <Corner className="left-0 bottom-0" />
  </div>
);

const TBtn = ({ d }: { d: string }) => (
  <Lc className="border-r border-[#555] last:border-r-0">
    <Ico s={13}><path d={d} fill="#eee" stroke="#222" strokeWidth="1" /></Ico>
  </Lc>
);

const TimeHeader = () => (
  <div className="relative flex items-center flex-1 pl-[8px] bg-[#727272] border-t border-[#8a8a8a] whitespace-nowrap">
    <DropIcon className="w-[29px]"><Ico><circle cx="8" cy="8" r="6.5" fill="#eee" stroke="#222" /><path d="M8 8V3M8 8l-4 3" stroke="#c03020" strokeWidth="1.4" /></Ico></DropIcon>
    <M w="w-[40px] ml-[11px]">View</M>
    <M w="w-[50px]">Marker</M>
    <M w="w-[47px]">Frame</M>
    <M w="w-[53px]">Playback</M>
    <Joined className="h-[18px] !divide-[#444]">
      <Lc className="!h-full"><Ico s={14}><circle cx="8" cy="8" r="5.5" fill="#eee" stroke="#222" /><path d="M8 8V2h6v6z" fill="#e88a20" /></Ico></Lc>
      <Lc className="!h-full"><LockI /></Lc>
    </Joined>
    <div className="flex h-[18px] w-[205px] ml-[6px] rounded-[9px] border border-[#333] overflow-hidden divide-x divide-[#333] shrink-0">
      <Num label="Start:" value="1" className="w-[104px] shrink-0 !h-[16px]" />
      <Num label="End:" value="250" className="flex-1 !h-[16px]" />
    </div>
    <Pill className="w-[80px] ml-[4px] shrink-0"><Num value="1" className="!h-[16px]" /></Pill>
    <div className="flex w-[108px] h-[18px] ml-[16px] overflow-hidden rounded-[5px] border border-[#2c2c2c] shrink-0">
      <TBtn d="M2 3h2v10H2zM13 3v10L5 8z" />
      <TBtn d="M8 3v10L2 8zM14 3v10L8 8z" />
      <TBtn d="M12 2v12L3 8z" />
      <TBtn d="M4 2v12l9-6z" />
      <TBtn d="M2 3v10l6-5zM8 3v10l6-5z" />
      <TBtn d="M3 3v10l8-5zM12 3h2v10h-2z" />
    </div>
    <div className={`flex items-center justify-between w-[102px] h-[18px] ml-[5px] pl-[6px] pr-[4px] rounded-[5px] border border-[#2c2c2c] shrink-0 ${tone.dark}`}>No Sync<UpDown /></div>
    <div className={`flex items-center justify-center w-[17px] h-[18px] ml-[16px] rounded-[5px] border border-[#2c2c2c] shrink-0 ${tone.tool}`}>
      <span className="w-[9px] h-[9px] rounded-full bg-[#e23a1a] border border-[#611]" />
    </div>
    <DropIcon className="w-[27px] ml-[5px]"><Ico s={12}><polygon points="8,2 14,8 8,14 2,8" fill="#f0a818" stroke="#111" /></Ico></DropIcon>
    <div className="flex items-center w-[152px] h-[18px] ml-[7px] overflow-hidden rounded-[5px] border border-[#2c2c2c] shrink-0">
      <div className={`flex items-center flex-1 h-full pl-[2px] ${tone.num}`}><Key /></div>
      <Lc className="border-l border-[#444]"><Wrench /></Lc>
      <Lc className="border-l border-[#444]"><Wrench off /></Lc>
    </div>
    <Corner className="left-0 bottom-0" />
  </div>
);

const TopBar = () => (
  <div className="relative flex items-center h-[24px] pl-[8px] pt-[1px] bg-[#727272] border-b border-black shrink-0 whitespace-nowrap">
    <DropIcon className="w-[27px]"><Info /></DropIcon>
    <M w="w-[34px] ml-[12px]">File</M>
    <M w="w-[50px]">Render</M>
    <M w="w-[54px]">Window</M>
    <M w="w-[32px]">Help</M>
    <Joined className="w-[172px] h-[18px] shrink-0">
      <div className={`flex items-center justify-center gap-[1px] w-[28px] ${tone.dark}`}><LayoutI /><UpDown /></div>
      <div className={`flex items-center flex-1 pl-[7px] ${tone.num}`}>Default</div>
      <Lc className="!h-full"><Plus /></Lc>
      <Lc className="!h-full"><Cross /></Lc>
    </Joined>
    <Joined className="w-[171px] h-[18px] ml-[6px] shrink-0">
      <div className={`flex items-center justify-center gap-[1px] w-[27px] ${tone.dark}`}><SceneI /><UpDown /></div>
      <div className={`flex items-center flex-1 pl-[8px] ${tone.num}`}>Scene</div>
      <Lc className="!h-full !w-[17px]"><Plus /></Lc>
      <Lc className="!h-full !w-[17px]"><Cross /></Lc>
    </Joined>
    <div className={`flex items-center justify-between w-[100px] h-[18px] ml-[16px] pl-[7px] pr-[4px] rounded-[5px] border border-[#2c2c2c] shrink-0 ${tone.dark}`}>Blender Render<UpDown /></div>
    <span className="ml-[15px]"><Logo /></span>
    <span className="ml-[8px] text-[#1c1c1c] tracking-[-0.22px]">v2.79 | Verts:8/8 | Edges:12/12 | Faces:6/6 | Tris:12 | Mem:9.43M | Cube.003</span>
    <Corner className="left-0 bottom-0" />
    <Corner className="right-0 top-0" />
  </div>
);

export default function App() {
  return (
    <div className="flex flex-col w-[1283px] h-[897px] overflow-hidden bg-[#727272] font-['Noto_Sans',sans-serif] text-[10px] tracking-[-0.3px]">
      <TopBar />
      <div className="flex flex-1 min-h-0">
        <div className="flex flex-col flex-1 min-w-0">
          <div className="flex h-[767px] shrink-0">
            <Shelf />
            <Viewport />
            <NPanel />
          </div>
          <ViewHeader />
          <Timeline />
          <div className="flex items-center h-[14px] pl-[4px] pr-[5px] shrink-0 bg-[#727272]">
            <div className="relative flex items-center w-full h-[12px] pl-[8px] rounded-[6px] border border-[#555] overflow-hidden text-[#111] bg-linear-to-b from-[#9a9a9a] to-[#8a8a8a]">
              <span className="absolute left-[2px] top-[2px] w-[6px] h-[6px] rounded-full bg-[#666]" />
              {frames.map((f) => (
                <span key={f} className={`w-[32.72px] shrink-0 text-center ${f < 0 ? "-ml-[3px] mr-[3px]" : ""}`}>{f}</span>
              ))}
            </div>
          </div>
          <TimeHeader />
        </div>
        <div className="flex flex-col w-[159px] border-l border-black shrink-0">
          <Outliner />
          <Properties />
        </div>
      </div>
    </div>
  );
}
